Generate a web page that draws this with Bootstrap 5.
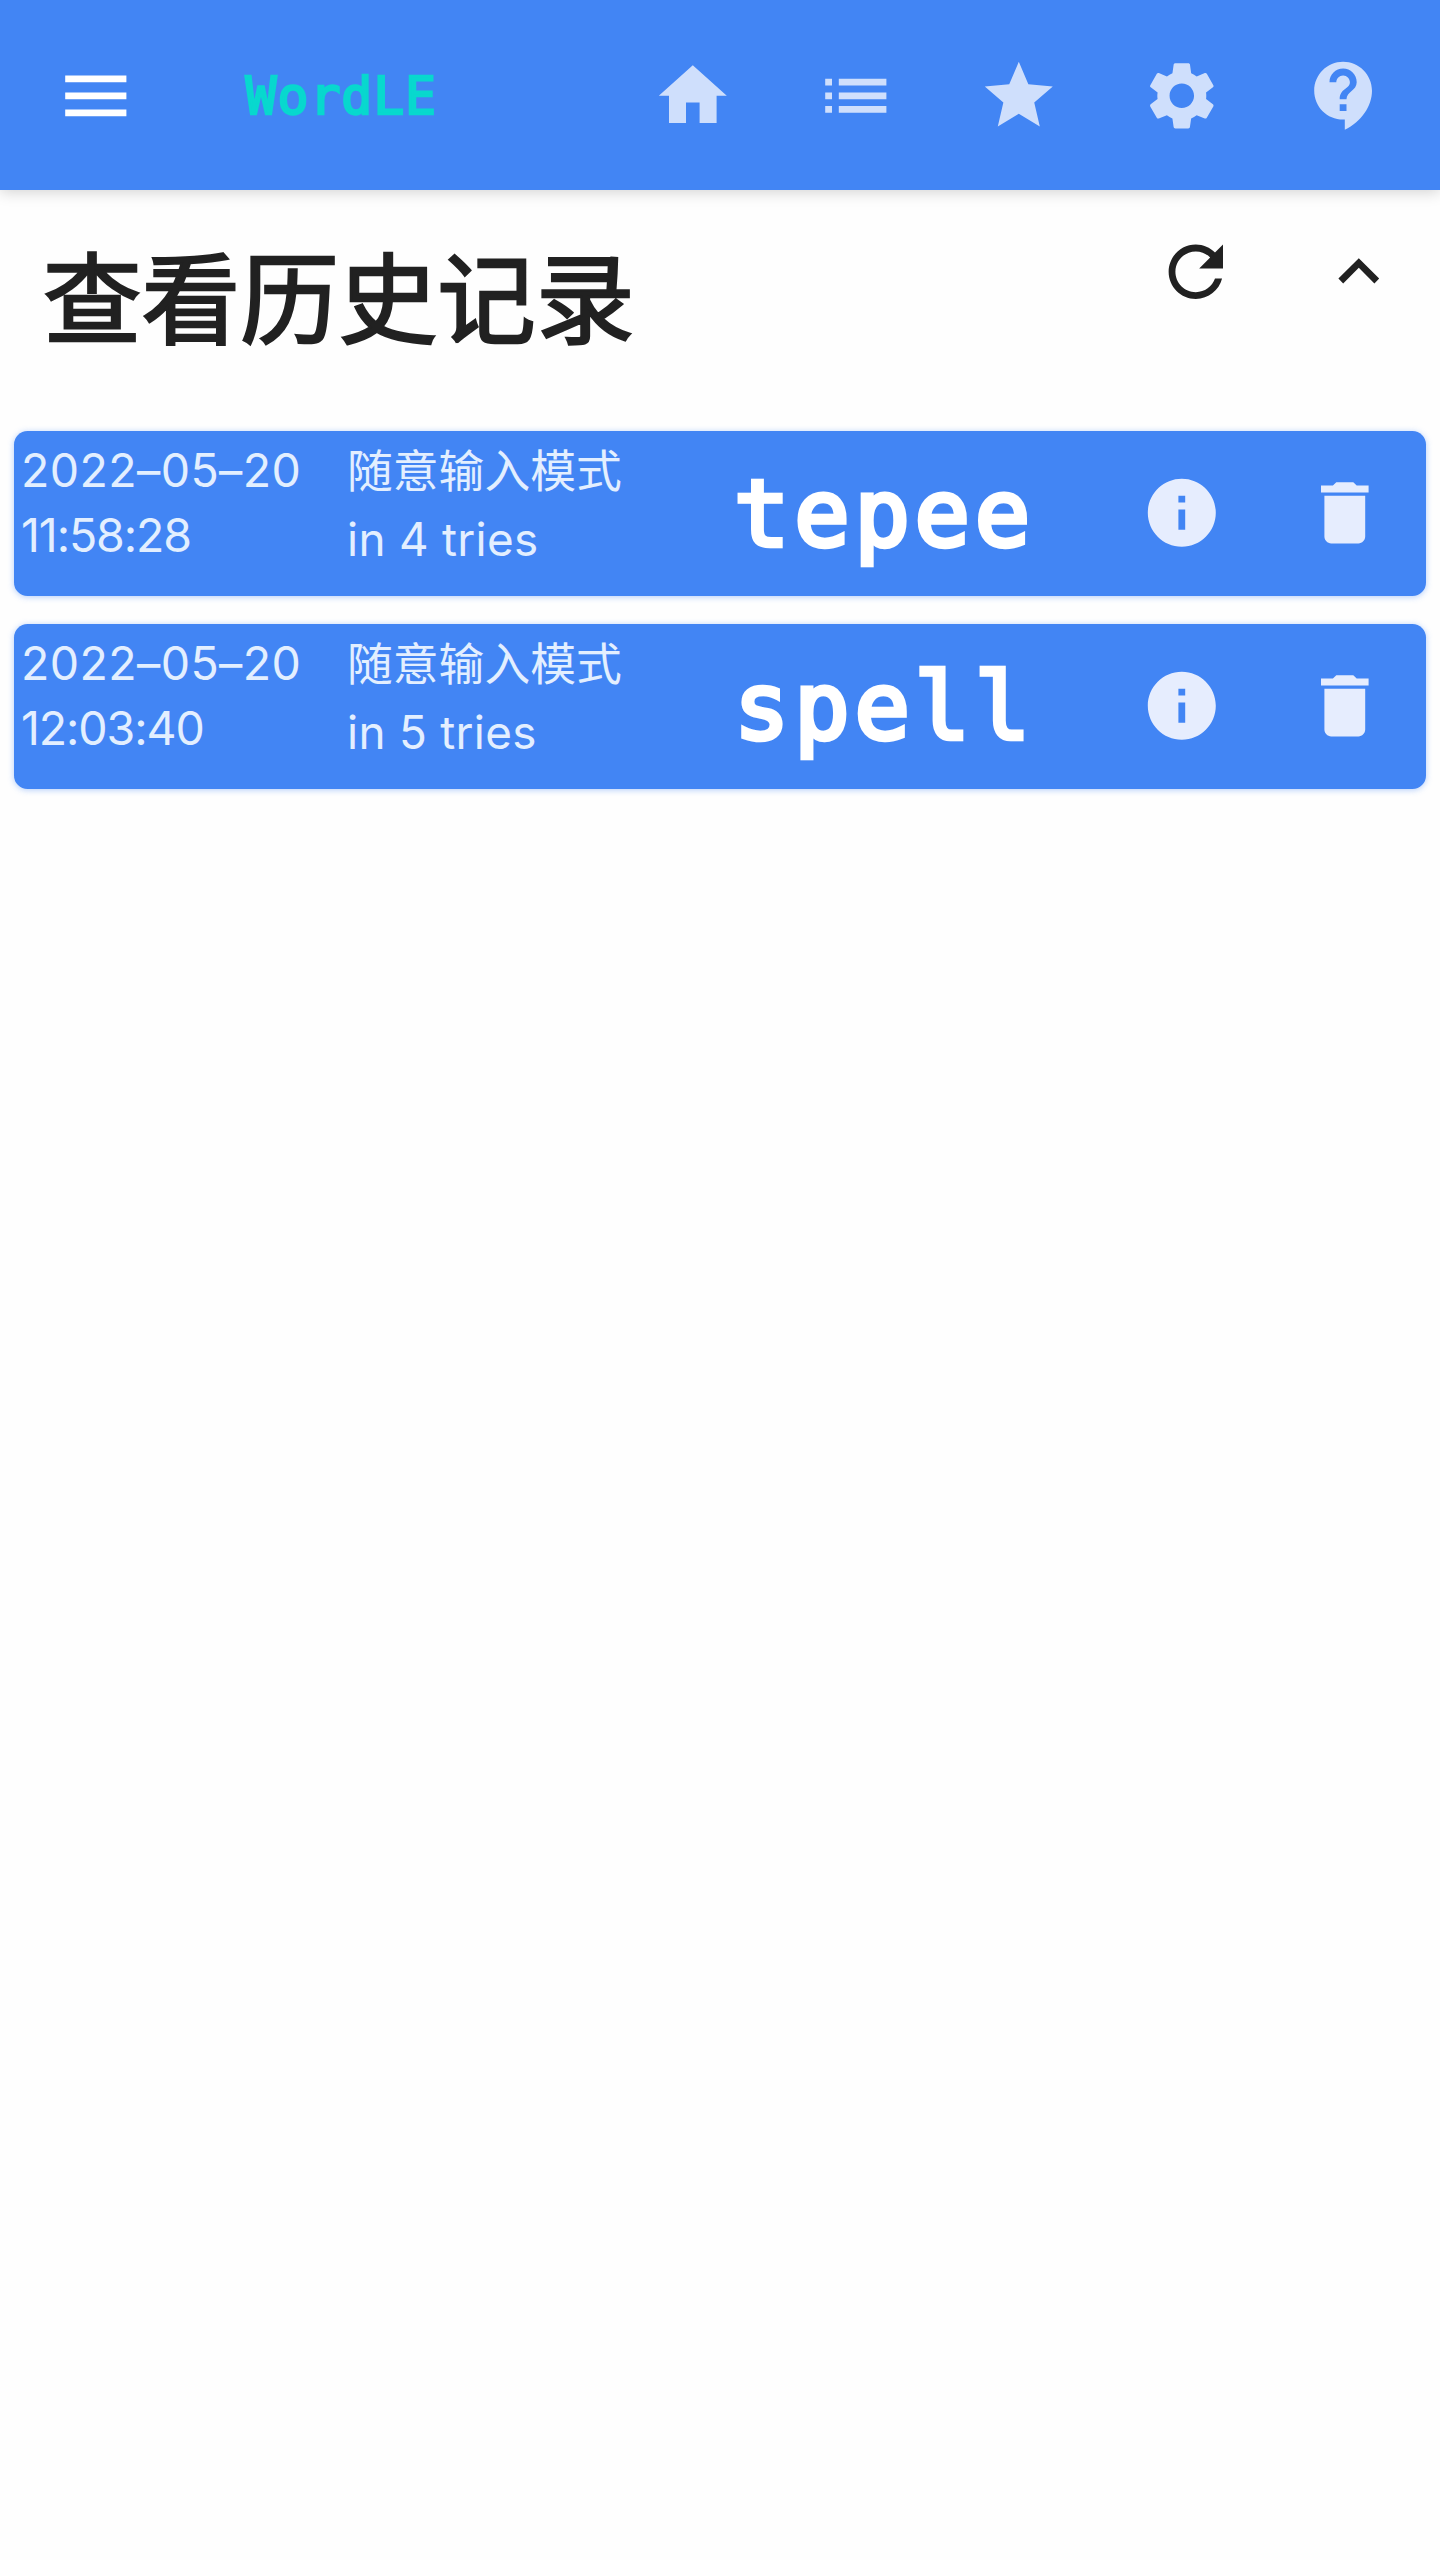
<!DOCTYPE html>
<html lang="zh-CN">
<head>
<meta charset="utf-8">
<meta name="viewport" content="width=device-width, initial-scale=1">
<title>WordLE</title>
<link href="https://cdn.jsdelivr.net/npm/bootstrap@5.3.0/dist/css/bootstrap.min.css" rel="stylesheet">
<style>
  body { background: #fefefe; color: #212121; font-family: Inter, "Noto Sans CJK SC", sans-serif; min-height: 2560px; }
  .topbar { height: 190px; background: #4285f4; padding: 2px 13.2px 0 14.4px; box-shadow: 0 2px 14px rgba(0,0,0,.18); }
  .icon-cell { width: 163.2px; flex: none; padding: 0; border: 0; color: inherit; background: none; display: flex; align-items: center; justify-content: center; }
  .icon-cell svg { width: 81.6px; height: 81.6px; fill: currentColor; display: block; }
  .nav-icons { color: #cfdffc; }
  .brand { font: 51.5px/64px "DejaVu Sans Mono", monospace; letter-spacing: .9px; color: #08d8ce; -webkit-text-stroke: 2.4px #08d8ce; margin-left: 68px; }
  .page-head { height: 241px; padding-left: 43px; }
  .page-title { font: 400 98.6px/110px "Noto Sans CJK SC", sans-serif; margin: 48px 0 0; -webkit-text-stroke: 2.4px #212121; }
  .head-actions { margin-top: 41px; margin-right: -.6px; }
  .records { padding: 0 14px; gap: 28px; }
  .record { height: 165px; border-radius: 13.6px; background: #4285f4; color: #e3efff; box-shadow: 0 1px 6px rgba(66,133,244,.4); }
  .rec-date { width: 326px; padding-left: 7px; padding-top: 7px; font-size: 46.5px; line-height: 65px; }
  .date-line { letter-spacing: .4px; }
  .time-line { letter-spacing: -1.1px; }
  .rec-mode { width: 394px; padding-left: 7px; padding-top: 3px; font-size: 45.8px; line-height: 69px; }
  .mode-line { font-family: "Noto Sans CJK SC", sans-serif; }
  .tries-line { letter-spacing: .3px; padding-top: 2px; }
  .rec-word { font: 92px/120px "DejaVu Sans Mono", monospace; letter-spacing: 4.8px; padding-top: 2px; color: #fff; -webkit-text-stroke: 4.6px #fff; }
  .rec-icons { color: #e6edfe; margin-right: -.8px; margin-top: -1px; }
</style>
<script src="https://cdn.jsdelivr.net/npm/bootstrap@5.3.0/dist/js/bootstrap.bundle.min.js"></script>
</head>
<body>
<header class="topbar d-flex align-items-center position-relative">
  <button class="icon-cell text-white" aria-label="menu"><svg viewBox="0 0 24 24"><path d="M3 18h18v-2H3v2zm0-5h18v-2H3v2zm0-7v2h18V6H3z"/></svg></button>
  <div class="brand">WordLE</div>
  <nav class="nav-icons d-flex ms-auto">
    <button class="icon-cell" aria-label="home"><svg viewBox="0 0 24 24"><path d="M10 20v-6h4v6h5v-8h3L12 3 2 12h3v8z"/></svg></button>
    <button class="icon-cell" aria-label="list"><svg viewBox="0 0 24 24"><path d="M3 13h2v-2H3v2zm0 4h2v-2H3v2zm0-8h2V7H3v2zm4 4h14v-2H7v2zm0 4h14v-2H7v2zM7 7v2h14V7H7z"/></svg></button>
    <button class="icon-cell" aria-label="favourites"><svg viewBox="0 0 24 24"><path d="M12 17.27L18.18 21l-1.64-7.03L22 9.24l-7.19-.61L12 2 9.19 8.63 2 9.24l5.46 4.73L5.82 21z"/></svg></button>
    <button class="icon-cell" aria-label="settings"><svg viewBox="0 0 24 24"><path d="M19.14 12.94c.04-.3.06-.61.06-.94 0-.32-.02-.64-.07-.94l2.03-1.58c.18-.14.23-.41.12-.61l-1.92-3.32c-.12-.22-.37-.29-.59-.22l-2.39.96c-.5-.38-1.03-.7-1.62-.94l-.36-2.54c-.04-.24-.24-.41-.48-.41h-3.84c-.24 0-.43.17-.47.41l-.36 2.54c-.59.24-1.13.57-1.62.94l-2.39-.96c-.22-.08-.47 0-.59.22L2.74 8.87c-.12.21-.08.47.12.61l2.03 1.58c-.05.3-.09.63-.09.94s.02.64.07.94l-2.03 1.58c-.18.14-.23.41-.12.61l1.92 3.32c.12.22.37.29.59.22l2.39-.96c.5.38 1.03.7 1.62.94l.36 2.54c.05.24.24.41.48.41h3.84c.24 0 .44-.17.47-.41l.36-2.54c.59-.24 1.13-.56 1.62-.94l2.39.96c.22.08.47 0 .59-.22l1.92-3.32c.12-.22.07-.47-.12-.61l-2.01-1.58zM12 15.6c-1.98 0-3.6-1.62-3.6-3.6s1.62-3.6 3.6-3.6 3.6 1.62 3.6 3.6-1.62 3.6-3.6 3.6z"/></svg></button>
    <button class="icon-cell" aria-label="help"><svg viewBox="0 0 24 24"><path d="M11.5 2C6.81 2 3 5.81 3 10.5S6.81 19 11.5 19h.5v3c4.86-2.34 8-7 8-11.5C20 5.81 16.19 2 11.5 2zm1 14.5h-2v-2h2v2zm0-3.5h-2c0-3.25 3-3 3-5 0-1.1-.9-2-2-2s-2 .9-2 2h-2c0-2.21 1.79-4 4-4s4 1.79 4 4c0 2.5-3 2.75-3 5z"/></svg></button>
  </nav>
</header>
<main>
  <section class="page-head d-flex justify-content-between align-items-start">
    <h1 class="page-title">查看历史记录</h1>
    <div class="head-actions d-flex">
      <button class="icon-cell" aria-label="refresh"><svg viewBox="0 0 24 24"><path d="M17.65 6.35C16.2 4.9 14.21 4 12 4c-4.42 0-7.99 3.58-7.99 8s3.57 8 7.99 8c3.73 0 6.84-2.55 7.73-6h-2.08c-.82 2.33-3.04 4-5.65 4-3.31 0-6-2.69-6-6s2.69-6 6-6c1.66 0 3.14.69 4.22 1.78L13 11h7V4l-2.35 2.35z"/></svg></button>
      <button class="icon-cell" aria-label="collapse"><svg viewBox="0 0 24 24"><path d="M12 8l-6 6 1.41 1.41L12 10.83l4.59 4.58L18 14z"/></svg></button>
    </div>
  </section>
  <section class="records d-flex flex-column">
    <article class="record d-flex">
      <div class="rec-date"><div class="date-line">2022–05–20</div><div class="time-line">11:58:28</div></div>
      <div class="rec-mode"><div class="mode-line">随意输入模式</div><div class="tries-line">in 4 tries</div></div>
      <div class="rec-word align-self-center">tepee</div>
      <div class="rec-icons d-flex ms-auto">
        <button class="icon-cell" aria-label="info"><svg viewBox="0 0 24 24"><path d="M12 2C6.48 2 2 6.48 2 12s4.48 10 10 10 10-4.48 10-10S17.52 2 12 2zm1 15h-2v-6h2v6zm0-8h-2V7h2v2z"/></svg></button>
        <button class="icon-cell" aria-label="delete"><svg viewBox="0 0 24 24"><path d="M6 19c0 1.1.9 2 2 2h8c1.1 0 2-.9 2-2V7H6v12zM19 4h-3.5l-1-1h-5l-1 1H5v2h14V4z"/></svg></button>
      </div>
    </article>
    <article class="record d-flex">
      <div class="rec-date"><div class="date-line">2022–05–20</div><div class="time-line">12:03:40</div></div>
      <div class="rec-mode"><div class="mode-line">随意输入模式</div><div class="tries-line">in 5 tries</div></div>
      <div class="rec-word align-self-center">spell</div>
      <div class="rec-icons d-flex ms-auto">
        <button class="icon-cell" aria-label="info"><svg viewBox="0 0 24 24"><path d="M12 2C6.48 2 2 6.48 2 12s4.48 10 10 10 10-4.48 10-10S17.52 2 12 2zm1 15h-2v-6h2v6zm0-8h-2V7h2v2z"/></svg></button>
        <button class="icon-cell" aria-label="delete"><svg viewBox="0 0 24 24"><path d="M6 19c0 1.1.9 2 2 2h8c1.1 0 2-.9 2-2V7H6v12zM19 4h-3.5l-1-1h-5l-1 1H5v2h14V4z"/></svg></button>
      </div>
    </article>
  </section>
</main>
</body>
</html>
